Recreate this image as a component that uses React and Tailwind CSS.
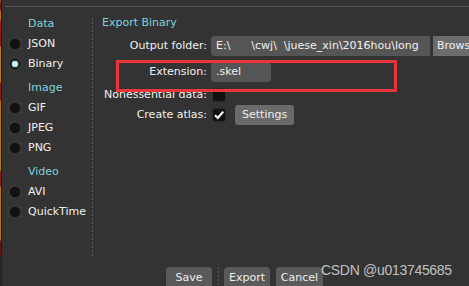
const font = "font-['DejaVu_Sans',sans-serif] text-[11px]";

function Radio({ checked }) {
  return (
    <span className="w-3 h-3 rounded-full bg-[#111] border border-[#2b2b2b] shadow-[0_0_0_1px_#3c3c3c] flex items-center justify-center shrink-0">
      {checked && <span className="w-[6px] h-[6px] rounded-full bg-[#c4f3fa] shadow-[0_0_2px_#7fe0ee]" />}
    </span>
  );
}

function Option({ label, checked }) {
  return (
    <div className="h-5 flex items-center gap-[7px] pl-[7px]">
      <Radio checked={checked} />
      <span className="text-[#f0f0f0]">{label}</span>
    </div>
  );
}

function Heading({ children, className = '' }) {
  return <div className={`h-5 flex items-center pl-[26px] text-[#7fd2de] ${className}`}>{children}</div>;
}

function Row({ label, className = '', children }) {
  return (
    <div className={`h-5 flex items-center ${className}`}>
      <span className="w-[105px] shrink-0 text-right whitespace-nowrap text-[#f0f0f0]">{label}</span>
      <div className="ml-[4px] flex items-center h-full flex-1 min-w-0">{children}</div>
    </div>
  );
}

const dashed = 'bg-[repeating-linear-gradient(to_bottom,#5c5c5c_0_2px,transparent_2px_4px)]';

export default function App() {
  return (
    <div className={`w-[469px] h-[286px] overflow-hidden bg-[#333333] flex ${font}`}>
      {/* left edge of the window behind */}
      <div className="w-px h-full shrink-0 bg-[linear-gradient(to_bottom,#9a5a1e_0px,#7a1616_4px,#7a1616_10px,#c0691a_11px,#c0691a_20px,#a81c12_21px,#8a1a14_46px,#b87a2a_47px,#b87a2a_82px,#8a1a14_83px,#8a1a14_100px,#c06a1c_101px,#a87a2a_170px,#8a1a14_172px,#8a1a14_186px,#b57028_187px,#b57028_240px,#6a1010_241px,#6a1010_256px,#2a2a2a_257px)]" />
      <div className="w-px h-full shrink-0 bg-[#1f1f1f]" />

      <div className="flex-1 flex flex-col min-w-0">
        <div className="mt-[6px] ml-[3px] h-px bg-[#555] shrink-0" />

        <div className="h-[260px] flex shrink-0">
          {/* formats */}
          <div className="w-[90px] shrink-0 pt-[7px]">
            <Heading>Data</Heading>
            <Option label="JSON" />
            <Option label="Binary" checked />
            <Heading className="mt-1">Image</Heading>
            <Option label="GIF" />
            <Option label="JPEG" />
            <Option label="PNG" />
            <Heading className="mt-1">Video</Heading>
            <Option label="AVI" />
            <Option label="QuickTime" />
          </div>

          <div className={`w-px mt-[11px] h-[238px] shrink-0 ${dashed}`} />

          {/* settings */}
          <div className="flex-1 min-w-0 pl-[9px] pt-[6px] relative">
            <div className="h-5 flex items-center text-[#7fd2de]">Export Binary</div>

            <Row label="Output folder:" className="mt-[3px]">
              <div className="h-5 flex-1 min-w-0 bg-[#555] rounded-l-[3px] flex items-center pl-[5px] text-[#f0f0f0] whitespace-pre overflow-hidden">
                {'E:\\      \\cwj\\  \\juese_xin\\2016hou\\long'}
              </div>
              <div className="h-5 w-[36px] ml-[3px] bg-[#6c6c6c] flex items-center pl-[4px] text-[#f0f0f0] overflow-hidden shrink-0">
                Brows
              </div>
            </Row>

            <Row label="Extension:" className="mt-[6px]">
              <div className="h-5 w-[60px] bg-[#555] rounded-[4px] flex items-center pl-[5px] text-[#f0f0f0]">.skel</div>
            </Row>

            <Row label="Nonessential data:" className="mt-[3px]">
              <span className="ml-[1px] w-[14px] h-[14px] rounded-[3px] bg-[#111] border border-[#2b2b2b]" />
            </Row>

            <Row label="Create atlas:">
              <span className="ml-[1px] w-[14px] h-[14px] rounded-[3px] bg-[#111] border border-[#2b2b2b] flex items-center justify-center">
                <svg width="12" height="12" viewBox="0 0 12 12">
                  <path d="M2 6.2 L4.8 9 L10.2 2.6" fill="none" stroke="#fff" strokeWidth="2.2" />
                </svg>
              </span>
              <button className="ml-[9px] h-5 px-[7px] rounded-[3px] bg-[#6a6a6a] text-[#f0f0f0]">Settings</button>
            </Row>

            {/* highlight box */}
            <div className="absolute left-[23px] top-[53px] w-[281px] h-[32px] border-[3px] border-[#e8363a] pointer-events-none" />
          </div>
        </div>

        {/* footer buttons */}
        <div className="h-[22px] flex shrink-0 pl-[164px] relative">
          <button className="w-[46px] h-[22px] rounded-[4px] bg-[#5a5a5a] text-[#eee]">Save</button>
          <div className={`w-px h-full ml-[6px] ${dashed}`} />
          <button className="w-[46px] h-[22px] ml-[5px] rounded-[4px] bg-[#5a5a5a] text-[#eee]">Export</button>
          <button className="w-[47px] h-[22px] ml-[6px] rounded-[4px] bg-[#5a5a5a] text-[#eee]">Cancel</button>
          <span className="absolute left-[319px] top-[-7px] font-['Liberation_Sans',sans-serif] text-[14px] tracking-[-0.3px] text-[#e6e6e6]/80 whitespace-nowrap">
            CSDN @u013745685
          </span>
        </div>
      </div>
    </div>
  );
}
